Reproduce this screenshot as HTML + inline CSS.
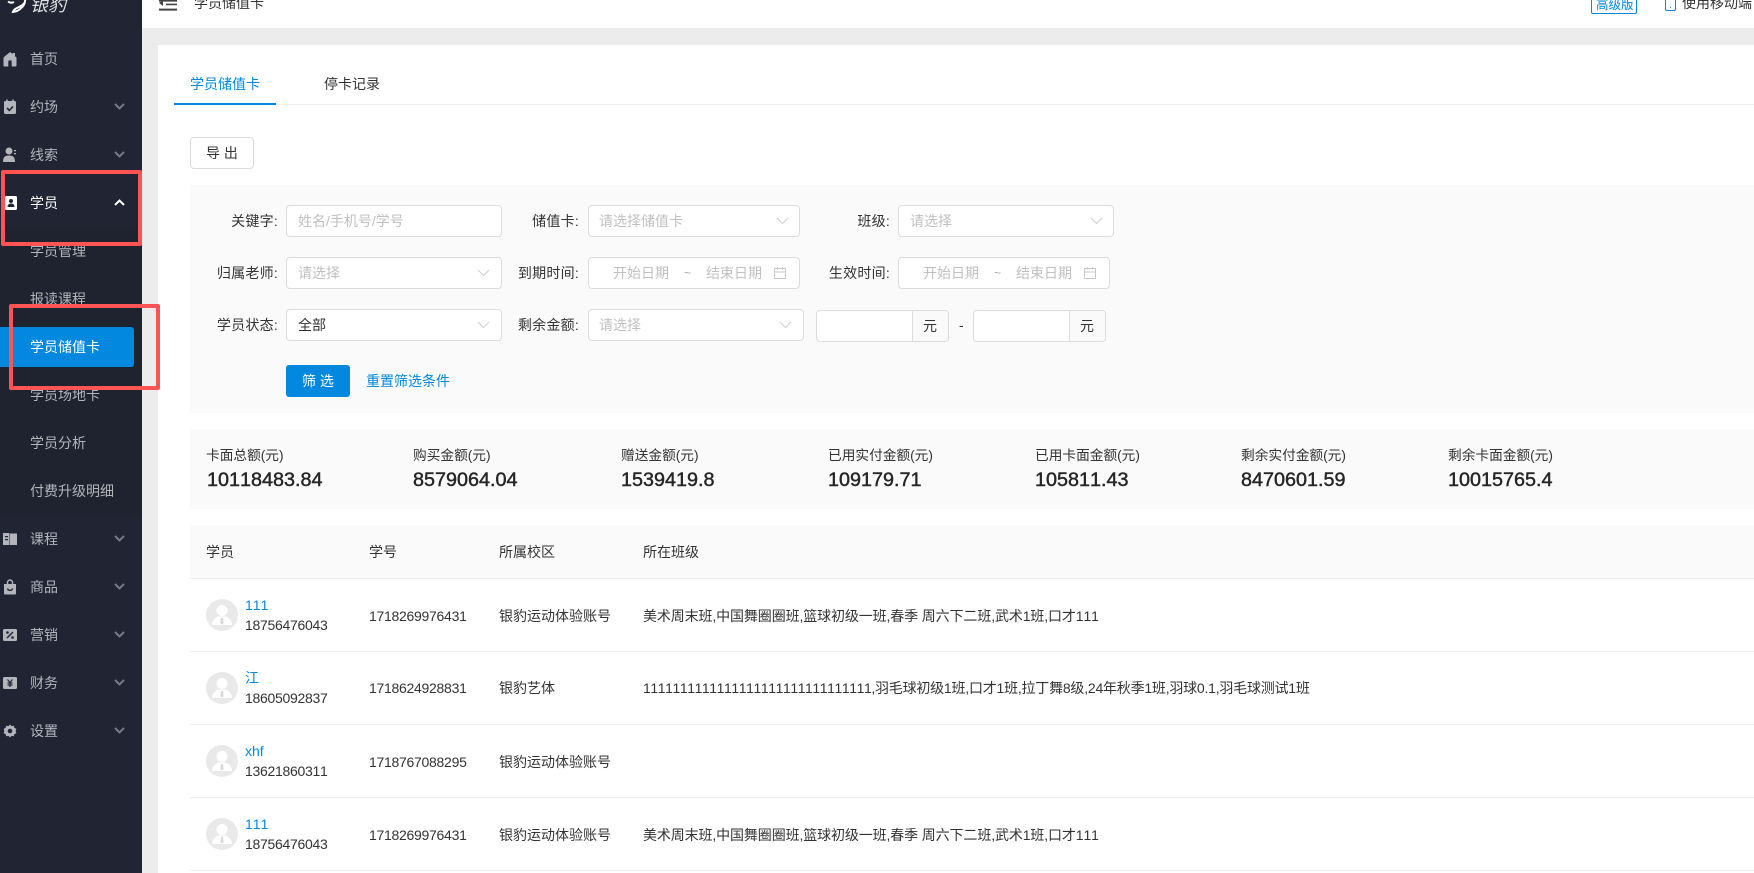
<!DOCTYPE html>
<html lang="zh">
<head>
<meta charset="utf-8">
<title>学员储值卡</title>
<style>
html,body{margin:0;padding:0;background:#fff}
body{width:1754px;height:873px;overflow:hidden;position:relative;font-family:"Liberation Sans","Noto Sans CJK SC",sans-serif;font-size:14px;color:#333;font-kerning:none}
.a{position:absolute;white-space:nowrap;line-height:20px}
.box{position:absolute;box-sizing:border-box}
.side{position:absolute;left:0;top:0;width:142px;height:873px;background:#212533}
.m{position:absolute;left:30px;color:#b4b5bb;line-height:20px;white-space:nowrap}
.ic{position:absolute;left:3px;width:14px;height:16px}
.chev{position:absolute;left:114px;width:11px;height:7px}
.inp{position:absolute;box-sizing:border-box;height:32px;background:#fff;border:1px solid #dcdcdc;border-radius:4px}
.ph{position:absolute;white-space:nowrap;line-height:20px;color:#c0c0c0}
.lab{position:absolute;white-space:nowrap;line-height:20px;text-align:right;color:#333;letter-spacing:.25px}
.cv{position:absolute;width:13px;height:8px}
.st{position:absolute;white-space:nowrap;line-height:20px;top:446px;color:#333;font-size:13.7px}
.val{position:absolute;white-space:nowrap;line-height:26px;top:467px;color:#262626;font-size:19.8px;font-weight:500;-webkit-text-stroke:.45px #262626}
.num{letter-spacing:-.28px}
.line{position:absolute;left:190px;right:0;height:1px;background:#eee}
.lnk{color:#0288de}
</style>
</head>
<body>

<!-- header -->
<svg class="box" style="left:158px;top:0" width="20" height="12" viewBox="0 0 20 12"><path d="M1 0h18v1.600H1zM1 8.600h18v2H1zM8 3.600h11v1.600H8z" fill="#444"/><path d="M1 3l4-3v6z" fill="#444"/></svg>
<div class="a" style="left:194px;top:-7px;color:#333">学员储值卡</div>
<div class="box" style="left:1591px;top:-10px;width:46px;height:24px;border:1px solid #0288de;border-radius:2px"></div>
<div class="a" style="left:1596px;top:-5px;color:#0288de;font-size:12.5px">高级版</div>
<div class="box" style="left:1665px;top:-8px;width:11px;height:19px;border:1px solid #0288de;border-radius:2px"></div>
<div class="box" style="left:1670px;top:7px;width:1px;height:1px;background:#0288de"></div>
<div class="a" style="left:1682px;top:-7px;color:#333">使用移动端</div>

<!-- grey background -->
<div class="box" style="left:142px;top:28px;width:1612px;height:17px;background:#ececec"></div>
<div class="box" style="left:142px;top:28px;width:16px;height:845px;background:#ececec"></div>

<!-- tabs -->
<div class="a" style="left:190px;top:74px;color:#0288de">学员储值卡</div>
<div class="a" style="left:324px;top:74px;color:#333">停卡记录</div>
<div class="box" style="left:174px;top:104px;width:1580px;height:1px;background:#eee"></div>
<div class="box" style="left:174px;top:103px;width:102px;height:2px;background:#0288de"></div>

<div class="box" style="left:190px;top:137px;width:64px;height:32px;border:1px solid #dcdcdc;border-radius:4px;background:#fff"></div>
<div class="a" style="left:206px;top:143px;color:#333">导 出</div>

<!-- filter -->
<div class="box" style="left:190px;top:185px;width:1564px;height:228px;background:#fafafa"></div>

<div class="lab" style="right:1476px;top:211px">关键字:</div>
<div class="inp" style="left:286px;top:205px;width:216px"></div>
<div class="ph" style="left:298px;top:211px">姓名/手机号/学号</div>

<div class="lab" style="right:1175px;top:211px">储值卡:</div>
<div class="inp" style="left:588px;top:205px;width:212px"></div>
<div class="ph" style="left:599px;top:211px">请选择储值卡</div>
<svg class="cv" style="left:776px;top:217px" viewBox="0 0 13 8"><path d="M1 1l5.500 5.500L12 1" fill="none" stroke="#cfcfcf" stroke-width="1"/></svg>

<div class="lab" style="right:864px;top:211px">班级:</div>
<div class="inp" style="left:898px;top:205px;width:216px"></div>
<div class="ph" style="left:910px;top:211px">请选择</div>
<svg class="cv" style="left:1090px;top:217px" viewBox="0 0 13 8"><path d="M1 1l5.500 5.500L12 1" fill="none" stroke="#cfcfcf" stroke-width="1"/></svg>

<div class="lab" style="right:1476px;top:263px">归属老师:</div>
<div class="inp" style="left:286px;top:257px;width:216px"></div>
<div class="ph" style="left:298px;top:263px">请选择</div>
<svg class="cv" style="left:477px;top:269px" viewBox="0 0 13 8"><path d="M1 1l5.500 5.500L12 1" fill="none" stroke="#cfcfcf" stroke-width="1"/></svg>

<div class="lab" style="right:1175px;top:263px">到期时间:</div>
<div class="inp" style="left:588px;top:257px;width:212px"></div>
<div class="ph" style="left:613px;top:263px">开始日期</div>
<div class="ph" style="left:684px;top:263px;font-size:12px;color:#aaa">~</div>
<div class="ph" style="left:706px;top:263px">结束日期</div>
<svg class="box" style="left:773px;top:266px" width="14" height="14" viewBox="0 0 14 14"><path d="M1.500 2.500h11v10h-11zM1.500 6h11M4.500 1v2.500M9.500 1v2.500" fill="none" stroke="#c8c8c8"/></svg>

<div class="lab" style="right:864px;top:263px">生效时间:</div>
<div class="inp" style="left:898px;top:257px;width:212px"></div>
<div class="ph" style="left:923px;top:263px">开始日期</div>
<div class="ph" style="left:994px;top:263px;font-size:12px;color:#aaa">~</div>
<div class="ph" style="left:1016px;top:263px">结束日期</div>
<svg class="box" style="left:1083px;top:266px" width="14" height="14" viewBox="0 0 14 14"><path d="M1.500 2.500h11v10h-11zM1.500 6h11M4.500 1v2.500M9.500 1v2.500" fill="none" stroke="#c8c8c8"/></svg>

<div class="lab" style="right:1476px;top:315px">学员状态:</div>
<div class="inp" style="left:286px;top:309px;width:216px"></div>
<div class="a" style="left:298px;top:315px;color:#333">全部</div>
<svg class="cv" style="left:477px;top:321px" viewBox="0 0 13 8"><path d="M1 1l5.500 5.500L12 1" fill="none" stroke="#cfcfcf" stroke-width="1"/></svg>

<div class="lab" style="right:1175px;top:315px">剩余金额:</div>
<div class="inp" style="left:588px;top:309px;width:216px"></div>
<div class="ph" style="left:599px;top:315px">请选择</div>
<svg class="cv" style="left:779px;top:321px" viewBox="0 0 13 8"><path d="M1 1l5.500 5.500L12 1" fill="none" stroke="#cfcfcf" stroke-width="1"/></svg>

<div class="inp" style="left:816px;top:310px;width:133px"></div>
<div class="box" style="left:912px;top:311px;width:36px;height:30px;background:#fafafa;border-left:1px solid #dcdcdc;border-radius:0 3px 3px 0"></div>
<div class="a" style="left:923px;top:316px;color:#333">元</div>
<div class="a" style="left:959px;top:315px;color:#333">-</div>
<div class="inp" style="left:973px;top:310px;width:133px"></div>
<div class="box" style="left:1069px;top:311px;width:36px;height:30px;background:#fafafa;border-left:1px solid #dcdcdc;border-radius:0 3px 3px 0"></div>
<div class="a" style="left:1080px;top:316px;color:#333">元</div>

<div class="box" style="left:286px;top:365px;width:64px;height:32px;background:#0288de;border-radius:3px"></div>
<div class="a" style="left:302px;top:371px;color:#fff">筛 选</div>
<div class="a lnk" style="left:366px;top:371px">重置筛选条件</div>

<!-- stats -->
<div class="box" style="left:190px;top:429px;width:1564px;height:80px;background:#fafafa"></div>
<div class="st" style="left:206px">卡面总额(元)</div><div class="val" style="left:207px">10118483.84</div>
<div class="st" style="left:413px">购买金额(元)</div><div class="val" style="left:413px">8579064.04</div>
<div class="st" style="left:621px">赠送金额(元)</div><div class="val" style="left:621px">1539419.8</div>
<div class="st" style="left:828px">已用实付金额(元)</div><div class="val" style="left:828px">109179.71</div>
<div class="st" style="left:1035px">已用卡面金额(元)</div><div class="val" style="left:1035px">105811.43</div>
<div class="st" style="left:1241px">剩余实付金额(元)</div><div class="val" style="left:1241px">8470601.59</div>
<div class="st" style="left:1448px">剩余卡面金额(元)</div><div class="val" style="left:1448px">10015765.4</div>

<!-- table -->
<div class="box" style="left:190px;top:525px;width:1564px;height:53px;background:#fafafa"></div>
<div class="line" style="top:578px"></div>
<div class="line" style="top:651px"></div>
<div class="line" style="top:724px"></div>
<div class="line" style="top:797px"></div>
<div class="line" style="top:870px"></div>
<div class="a" style="left:206px;top:542px">学员</div>
<div class="a" style="left:369px;top:542px">学号</div>
<div class="a" style="left:499px;top:542px">所属校区</div>
<div class="a" style="left:643px;top:542px">所在班级</div>

<!-- rows -->
<svg class="box" style="left:206px;top:599px" width="32" height="32" viewBox="0 0 32 32"><circle cx="16" cy="16" r="16" fill="#e9e9e9"/><circle cx="16" cy="11.500" r="5.500" fill="#fff"/><path d="M6 26c0-5 4-8 7-8.500h6c3 .5 7 3.500 7 8.500z" fill="#fff"/><path d="M15 19h2l.6 5-1.600 1.500-1.600-1.500z" fill="#d8d8d8"/></svg>
<div class="a lnk" style="left:245px;top:595px">111</div>
<div class="a num" style="left:245px;top:615px">18756476043</div>
<div class="a num" style="left:369px;top:606px">1718269976431</div>
<div class="a" style="left:499px;top:606px">银豹运动体验账号</div>
<div class="a" style="left:643px;top:606px;letter-spacing:-.12px">美术周末班,中国舞圈圈班,篮球初级一班,春季 周六下二班,武术1班,口才111</div>

<svg class="box" style="left:206px;top:672px" width="32" height="32" viewBox="0 0 32 32"><circle cx="16" cy="16" r="16" fill="#e9e9e9"/><circle cx="16" cy="11.500" r="5.500" fill="#fff"/><path d="M6 26c0-5 4-8 7-8.500h6c3 .5 7 3.500 7 8.500z" fill="#fff"/><path d="M15 19h2l.6 5-1.600 1.500-1.600-1.500z" fill="#d8d8d8"/></svg>
<div class="a lnk" style="left:245px;top:668px">江</div>
<div class="a num" style="left:245px;top:688px">18605092837</div>
<div class="a num" style="left:369px;top:678px">1718624928831</div>
<div class="a" style="left:499px;top:678px">银豹艺体</div>
<div class="a" style="left:643px;top:678px;letter-spacing:-.22px"><span style="letter-spacing:-.42px">1111111111111111111111111111111</span>,羽毛球初级1班,口才1班,拉丁舞8级,24年秋季1班,羽球0.1,羽毛球测试1班</div>

<svg class="box" style="left:206px;top:745px" width="32" height="32" viewBox="0 0 32 32"><circle cx="16" cy="16" r="16" fill="#e9e9e9"/><circle cx="16" cy="11.500" r="5.500" fill="#fff"/><path d="M6 26c0-5 4-8 7-8.500h6c3 .5 7 3.500 7 8.500z" fill="#fff"/><path d="M15 19h2l.6 5-1.600 1.500-1.600-1.500z" fill="#d8d8d8"/></svg>
<div class="a lnk" style="left:245px;top:741px">xhf</div>
<div class="a num" style="left:245px;top:761px">13621860311</div>
<div class="a num" style="left:369px;top:752px">1718767088295</div>
<div class="a" style="left:499px;top:752px">银豹运动体验账号</div>

<svg class="box" style="left:206px;top:818px" width="32" height="32" viewBox="0 0 32 32"><circle cx="16" cy="16" r="16" fill="#e9e9e9"/><circle cx="16" cy="11.500" r="5.500" fill="#fff"/><path d="M6 26c0-5 4-8 7-8.500h6c3 .5 7 3.500 7 8.500z" fill="#fff"/><path d="M15 19h2l.6 5-1.600 1.500-1.600-1.500z" fill="#d8d8d8"/></svg>
<div class="a lnk" style="left:245px;top:814px">111</div>
<div class="a num" style="left:245px;top:834px">18756476043</div>
<div class="a num" style="left:369px;top:825px">1718269976431</div>
<div class="a" style="left:499px;top:825px">银豹运动体验账号</div>
<div class="a" style="left:643px;top:825px;letter-spacing:-.12px">美术周末班,中国舞圈圈班,篮球初级一班,春季 周六下二班,武术1班,口才111</div>

<!-- sidebar -->
<div class="side">
  <svg class="box" style="left:6px;top:0" width="22" height="13" viewBox="0 0 22 13"><path d="M2 1.500c2 1.500 4 1.500 6 .5M19 -1c1 3-2 6-6 8-3 1.500-5 2-6 5l4-1c4-2 8-6 8-10z" fill="none" stroke="#fff" stroke-width="2"/></svg>
  <div class="a" style="left:30px;top:-5px;color:#e0e0e0;font-size:18px;font-style:italic">银豹</div>

  <svg class="ic" style="top:51px" viewBox="0 0 14 16"><path d="M7 1l2.500 2V2H12v3.200L13.500 6.500v8a1 1 0 0 1-1 1h-11a1 1 0 0 1-1-1v-8z" fill="#b4b5bb"/><rect x="5.300" y="9.500" width="3.400" height="6" fill="#212533"/></svg>
  <div class="m" style="top:49px">首页</div>

  <svg class="ic" style="top:99px" viewBox="0 0 14 16"><rect x="1" y="2" width="12" height="13" rx="1.500" fill="#b4b5bb"/><path d="M4 0.500v3M10 0.500v3" stroke="#b4b5bb" stroke-width="1.500"/><path d="M4 9l2.300 2.300L10 7.500" fill="none" stroke="#212533" stroke-width="1.600"/></svg>
  <div class="m" style="top:97px">约场</div>
  <svg class="chev" style="top:103px" viewBox="0 0 11 7"><path d="M1 1l4.500 4.500L10 1" fill="none" stroke="#777a85" stroke-width="2"/></svg>

  <svg class="ic" style="top:147px" viewBox="0 0 14 16"><circle cx="6" cy="4" r="3.500" fill="#b4b5bb"/><path d="M0 15c0-5 2-6.500 6-6.500s6 1.500 6 6.500z" fill="#b4b5bb"/><path d="M11 3h2v1.200h-2zM11 6h2v1.200h-2z" fill="#b4b5bb"/></svg>
  <div class="m" style="top:145px">线索</div>
  <svg class="chev" style="top:151px" viewBox="0 0 11 7"><path d="M1 1l4.500 4.500L10 1" fill="none" stroke="#777a85" stroke-width="2"/></svg>

  <div class="box" style="left:0;top:227px;width:142px;height:288px;background:#1f2330"></div>
  <svg class="box" style="left:5px;top:196px" width="12" height="14" viewBox="0 0 12 14"><rect width="12" height="14" rx="1.500" fill="#fff"/><circle cx="6" cy="5" r="2" fill="#212533"/><path d="M2.500 11c0-2.500 1.500-3.500 3.500-3.500s3.500 1 3.500 3.500z" fill="#212533"/></svg>
  <div class="m" style="top:193px;color:#fff">学员</div>
  <svg class="chev" style="top:199px" viewBox="0 0 11 7"><path d="M1 6l4.500-4.500L10 6" fill="none" stroke="#fff" stroke-width="2"/></svg>

  <div class="m" style="top:241px">学员管理</div>
  <div class="m" style="top:289px">报读课程</div>
  <div class="box" style="left:0;top:327px;width:134px;height:40px;background:#0288de;border-radius:0 3px 3px 0"></div>
  <div class="m" style="top:337px;color:#fff">学员储值卡</div>
  <div class="m" style="top:385px">学员场地卡</div>
  <div class="m" style="top:433px">学员分析</div>
  <div class="m" style="top:481px">付费升级明细</div>

  <svg class="ic" style="top:531px" viewBox="0 0 14 16"><path d="M0 2h6.500v12H0zM7 2.500H14v11.500H7z" fill="#b4b5bb"/><path d="M2 5h3v1.300H2zM2 8h3v1.300H2z" fill="#212533"/></svg>
  <div class="m" style="top:529px">课程</div>
  <svg class="chev" style="top:535px" viewBox="0 0 11 7"><path d="M1 1l4.500 4.500L10 1" fill="none" stroke="#777a85" stroke-width="2"/></svg>

  <svg class="ic" style="top:579px" viewBox="0 0 14 16"><path d="M1 5h12v9.500a1 1 0 0 1-1 1H2a1 1 0 0 1-1-1z" fill="#b4b5bb"/><path d="M4.500 6V3.500a2.500 2.500 0 0 1 5 0V6" fill="none" stroke="#b4b5bb" stroke-width="1.400"/><path d="M4.500 9.500c.5 2.500 4.500 2.500 5 0" fill="none" stroke="#212533" stroke-width="1.400"/></svg>
  <div class="m" style="top:577px">商品</div>
  <svg class="chev" style="top:583px" viewBox="0 0 11 7"><path d="M1 1l4.500 4.500L10 1" fill="none" stroke="#777a85" stroke-width="2"/></svg>

  <svg class="ic" style="top:627px" viewBox="0 0 14 16"><rect y="2" width="14" height="12" rx="1.500" fill="#b4b5bb"/><path d="M4 11l6-6" stroke="#212533" stroke-width="1.400"/><circle cx="4.500" cy="5.500" r="1.300" fill="#212533"/><circle cx="9.500" cy="10.500" r="1.300" fill="#212533"/></svg>
  <div class="m" style="top:625px">营销</div>
  <svg class="chev" style="top:631px" viewBox="0 0 11 7"><path d="M1 1l4.500 4.500L10 1" fill="none" stroke="#777a85" stroke-width="2"/></svg>

  <svg class="ic" style="top:675px" viewBox="0 0 14 16"><rect y="2" width="14" height="12" rx="1.500" fill="#b4b5bb"/><path d="M4.500 4.500L7 7.500l2.500-3M7 7.500V12M4.500 8h5M4.500 10h5" fill="none" stroke="#212533" stroke-width="1.200"/></svg>
  <div class="m" style="top:673px">财务</div>
  <svg class="chev" style="top:679px" viewBox="0 0 11 7"><path d="M1 1l4.500 4.500L10 1" fill="none" stroke="#777a85" stroke-width="2"/></svg>

  <svg class="ic" style="top:723px" viewBox="0 0 14 16"><path d="M7 1.500l1.500 1.600 2.200-.3.700 2.100 2 1L12.600 8l.8 2.100-2 1-.7 2.100-2.200-.3L7 14.500l-1.500-1.600-2.200.3-.7-2.100-2-1L1.400 8 .6 5.900l2-1 .7-2.100 2.200.3z" fill="#b4b5bb"/><circle cx="7" cy="8" r="2.300" fill="#212533"/></svg>
  <div class="m" style="top:721px">设置</div>
  <svg class="chev" style="top:727px" viewBox="0 0 11 7"><path d="M1 1l4.500 4.500L10 1" fill="none" stroke="#777a85" stroke-width="2"/></svg>
</div>

<!-- red annotation boxes -->
<div class="box" style="left:1px;top:170px;width:141px;height:76px;border:4px solid #ff5454;border-radius:2px"></div>
<div class="box" style="left:9px;top:304px;width:151px;height:86px;border:4px solid #ff5454;border-radius:2px"></div>

</body>
</html>
